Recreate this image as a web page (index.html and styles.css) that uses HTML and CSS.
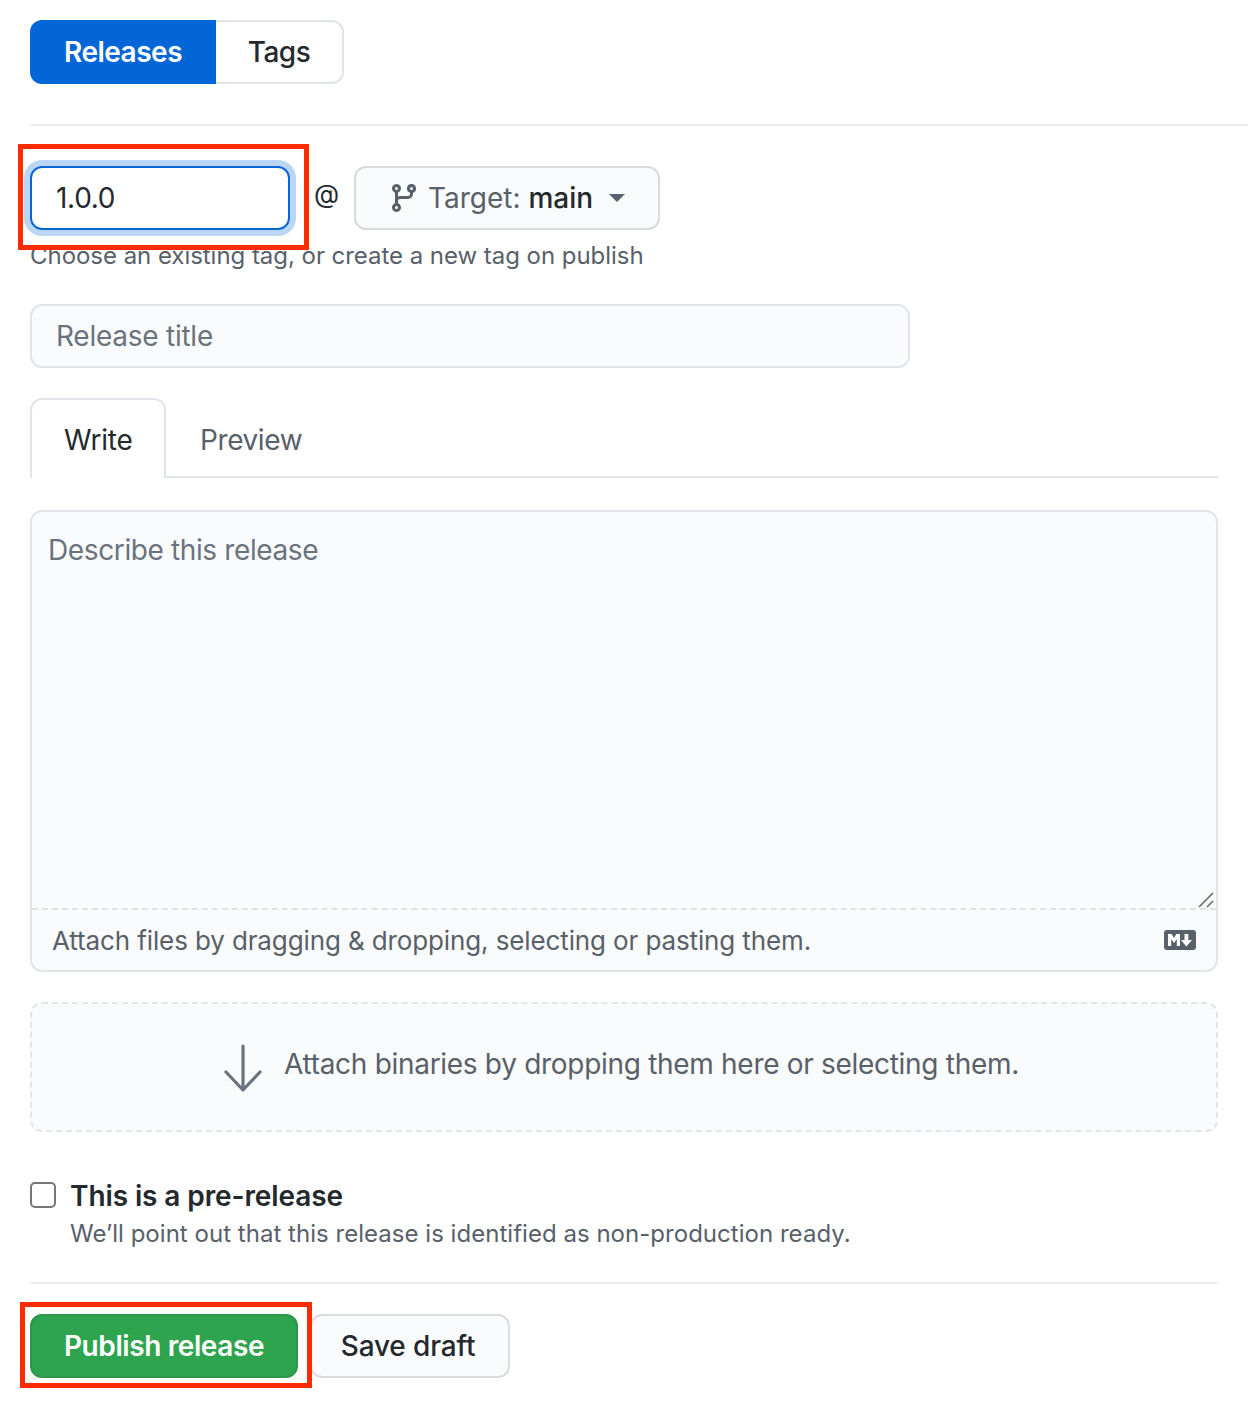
FILE: index.html
```html
<!DOCTYPE html>
<html lang="en">
<head>
<meta charset="utf-8">
<title>New release</title>
<link rel="stylesheet" href="styles.css">
</head>
<body>
<main class="page">
  <nav class="segment">
    <a class="segment-item selected">Releases</a>
    <a class="segment-item">Tags</a>
  </nav>
  <hr class="rule-top">
  <div class="tag-row">
    <div class="tag-input">1.0.0</div>
    <span class="at">@</span>
    <button class="target">
      <svg class="branch" viewBox="0 0 16 16" width="32" height="32"><path fill="#586069" fill-rule="evenodd" d="M11.75 2.5a.75.75 0 100 1.5.75.75 0 000-1.5zm-2.25.75a2.25 2.25 0 113 2.122V6A2.5 2.5 0 0110 8.5H6a1 1 0 00-1 1v1.128a2.251 2.251 0 11-1.5 0V5.372a2.25 2.25 0 111.5 0v1.836A2.492 2.492 0 016 7h4a1 1 0 001-1v-.628A2.25 2.25 0 019.5 3.25zM4.25 12a.75.75 0 100 1.5.75.75 0 000-1.5zM3.5 3.25a.75.75 0 111.5 0 .75.75 0 01-1.5 0z"/></svg>
      <span class="target-label">Target: <b>main</b></span>
      <span class="caret"></span>
    </button>
  </div>
  <p class="note">Choose an existing tag, or create a new tag on publish</p>
  <div class="title-input">Release title</div>
  <div class="tabs">
    <span class="tab active">Write</span>
    <span class="tab">Preview</span>
  </div>
  <section class="editor">
    <div class="editor-text">Describe this release
      <svg class="resize" viewBox="0 0 16 16" width="16" height="16"><path d="M1 15L15 1M9 15l6-6" stroke="#666" stroke-width="1.5" fill="none"/></svg>
    </div>
    <div class="editor-foot">
      <span>Attach files by dragging &amp; dropping, selecting or pasting them.</span>
      <svg class="md" viewBox="0 0 32 20" width="32" height="20"><rect width="32" height="20" rx="3" fill="#586069"/><path fill="#fff" d="M4 16V4h3.600L10 8l2.400-4H16v12h-3.200V9l-2.800 4-2.800-4v7zM20.500 4h3.800v6H28l-5.700 6.500L17 10h3.500z"/></svg>
    </div>
  </section>
  <section class="drop">
    <svg class="arrow" viewBox="0 0 40 48" width="40" height="48"><path d="M20 2v44M3 28l17 18 17-18" fill="none" stroke="#6a737d" stroke-width="3.2" stroke-linecap="round" stroke-linejoin="round"/></svg>
    <span>Attach binaries by dropping them here or selecting them.</span>
  </section>
  <div class="pre">
    <span class="check"></span>
    <div>
      <div class="pre-title">This is a pre-release</div>
      <div class="pre-desc">We’ll point out that this release is identified as non-production ready.</div>
    </div>
  </div>
  <hr class="rule-bottom">
  <div class="actions">
    <button class="publish">Publish release</button>
    <button class="draft">Save draft</button>
  </div>
  <div class="mark mark-tag"></div>
  <div class="mark mark-publish"></div>
</main>
</body>
</html>
```
FILE: styles.css
```css
* { box-sizing: border-box; }
html, body { margin: 0; padding: 0; background: #fff; overflow: hidden; }
body { font-family: Inter, "Liberation Sans", sans-serif; font-size: 28px; letter-spacing: -0.3px; color: #24292e; width: 1248px; height: 1408px; }
.page { position: relative; padding: 20px 0 0 30px; height: 1408px; }
button { font: inherit; letter-spacing: inherit; }

.segment { display: flex; width: 314px; height: 64px; }
.segment-item { display: flex; align-items: center; justify-content: center; font-weight: 500; }
.segment-item.selected { width: 186px; background: #0366d6; color: #fff; border-radius: 12px 0 0 12px; font-weight: 600; letter-spacing: -0.5px; }
.segment-item:not(.selected) { width: 128px; border: 2px solid #e1e4e8; border-left: 0; border-radius: 0 12px 12px 0; letter-spacing: -0.5px; }

.rule-top { margin: 40px 0 0; border: 0; height: 2px; background: #eaecef; }

.tag-row { display: flex; align-items: center; margin-top: 40px; height: 64px; }
.tag-input { width: 260px; height: 64px; border: 2px solid #0366d6; border-radius: 12px; box-shadow: 0 0 0 6px rgba(3, 102, 214, .27); padding-left: 24px; line-height: 60px; }
.at { margin-left: 24px; width: 40px; font-size: 26px; position: relative; top: -5px; }
.target { display: flex; align-items: center; width: 306px; height: 64px; background: #fafbfc; border: 2px solid #d8dadc; border-radius: 12px; padding: 0 0 0 32px; color: #586069; letter-spacing: 0; }
.branch { flex: none; margin-right: 8px; }
.target-label { white-space: nowrap; }
.target-label b { font-weight: 500; color: #24292e; }
.caret { margin-left: 16px; width: 0; height: 0; border: 8px solid transparent; border-top-color: #586069; border-bottom: 0; }

.note { margin: 12px 0 0; font-size: 24px; line-height: 28px; color: #586069; letter-spacing: -0.04px; }

.title-input { margin-top: 34px; width: 880px; height: 64px; border: 2px solid #e1e4e8; border-radius: 12px; background: #fafbfc; padding-left: 24px; line-height: 60px; color: #6a737d; letter-spacing: -0.25px; }

.tabs { display: flex; margin-top: 30px; width: 1188px; height: 80px; border-bottom: 2px solid #e1e4e8; }
.tab { display: flex; align-items: center; padding: 6px 34px 0; color: #586069; height: 78px; letter-spacing: -0.4px; }
.tab.active { width: 136px; height: 80px; color: #24292e; background: #fff; border: 2px solid #e1e4e8; border-bottom: 0; border-radius: 12px 12px 0 0; padding: 2px 0 0 32px; letter-spacing: -0.2px; }

.editor { margin-top: 32px; width: 1188px; height: 462px; border: 2px solid #e1e4e8; border-radius: 12px; background: #fafbfc; display: flex; flex-direction: column; }
.editor-text { position: relative; flex: 1; padding: 20px 16px; line-height: 36px; color: #6a737d; border-bottom: 2px dashed #dfe2e5; letter-spacing: -0.38px; }
.resize { position: absolute; right: 2px; bottom: 0; }
.editor-foot { display: flex; flex: none; align-items: center; justify-content: space-between; height: 60px; padding: 0 20px; font-size: 26px; color: #586069; letter-spacing: -0.12px; }
.md { flex: none; }

.drop { display: flex; align-items: center; justify-content: center; gap: 21px; margin-top: 30px; width: 1188px; height: 130px; padding: 0 6px 6px 0; border: 2px dashed #e1e4e8; border-radius: 12px; background: #fafbfc; color: #586069; letter-spacing: -0.3px; }
.arrow { flex: none; margin-top: 8px; }

.pre { display: flex; gap: 14px; margin-top: 46px; }
.check { flex: none; width: 26px; height: 26px; margin-top: 4px; border: 2px solid #767676; border-radius: 5px; background: #fff; }
.pre-title { font-weight: 600; line-height: 36px; letter-spacing: -0.1px; }
.pre-desc { margin-top: 4px; font-size: 24px; line-height: 32px; color: #586069; letter-spacing: 0.03px; }

.rule-bottom { margin: 32px 0 0; border: 0; width: 1188px; height: 2px; background: #eaecef; }

.actions { display: flex; gap: 12px; margin-top: 30px; }
.publish { width: 268px; height: 64px; background: #2ea44f; border: 2px solid #2c974b; border-radius: 12px; color: #fff; font-weight: 600; padding: 0; letter-spacing: -0.4px; }
.draft { width: 200px; height: 64px; background: #fafbfc; border: 2px solid #dadcde; border-radius: 12px; color: #24292e; font-weight: 500; padding: 0 4px 0 0; letter-spacing: -0.15px; }

.mark { position: absolute; border: 5px solid #fd2c00; pointer-events: none; }
.mark-tag { left: 18px; top: 144px; width: 291px; height: 106px; }
.mark-publish { left: 20px; top: 1302px; width: 292px; height: 86px; }
```
